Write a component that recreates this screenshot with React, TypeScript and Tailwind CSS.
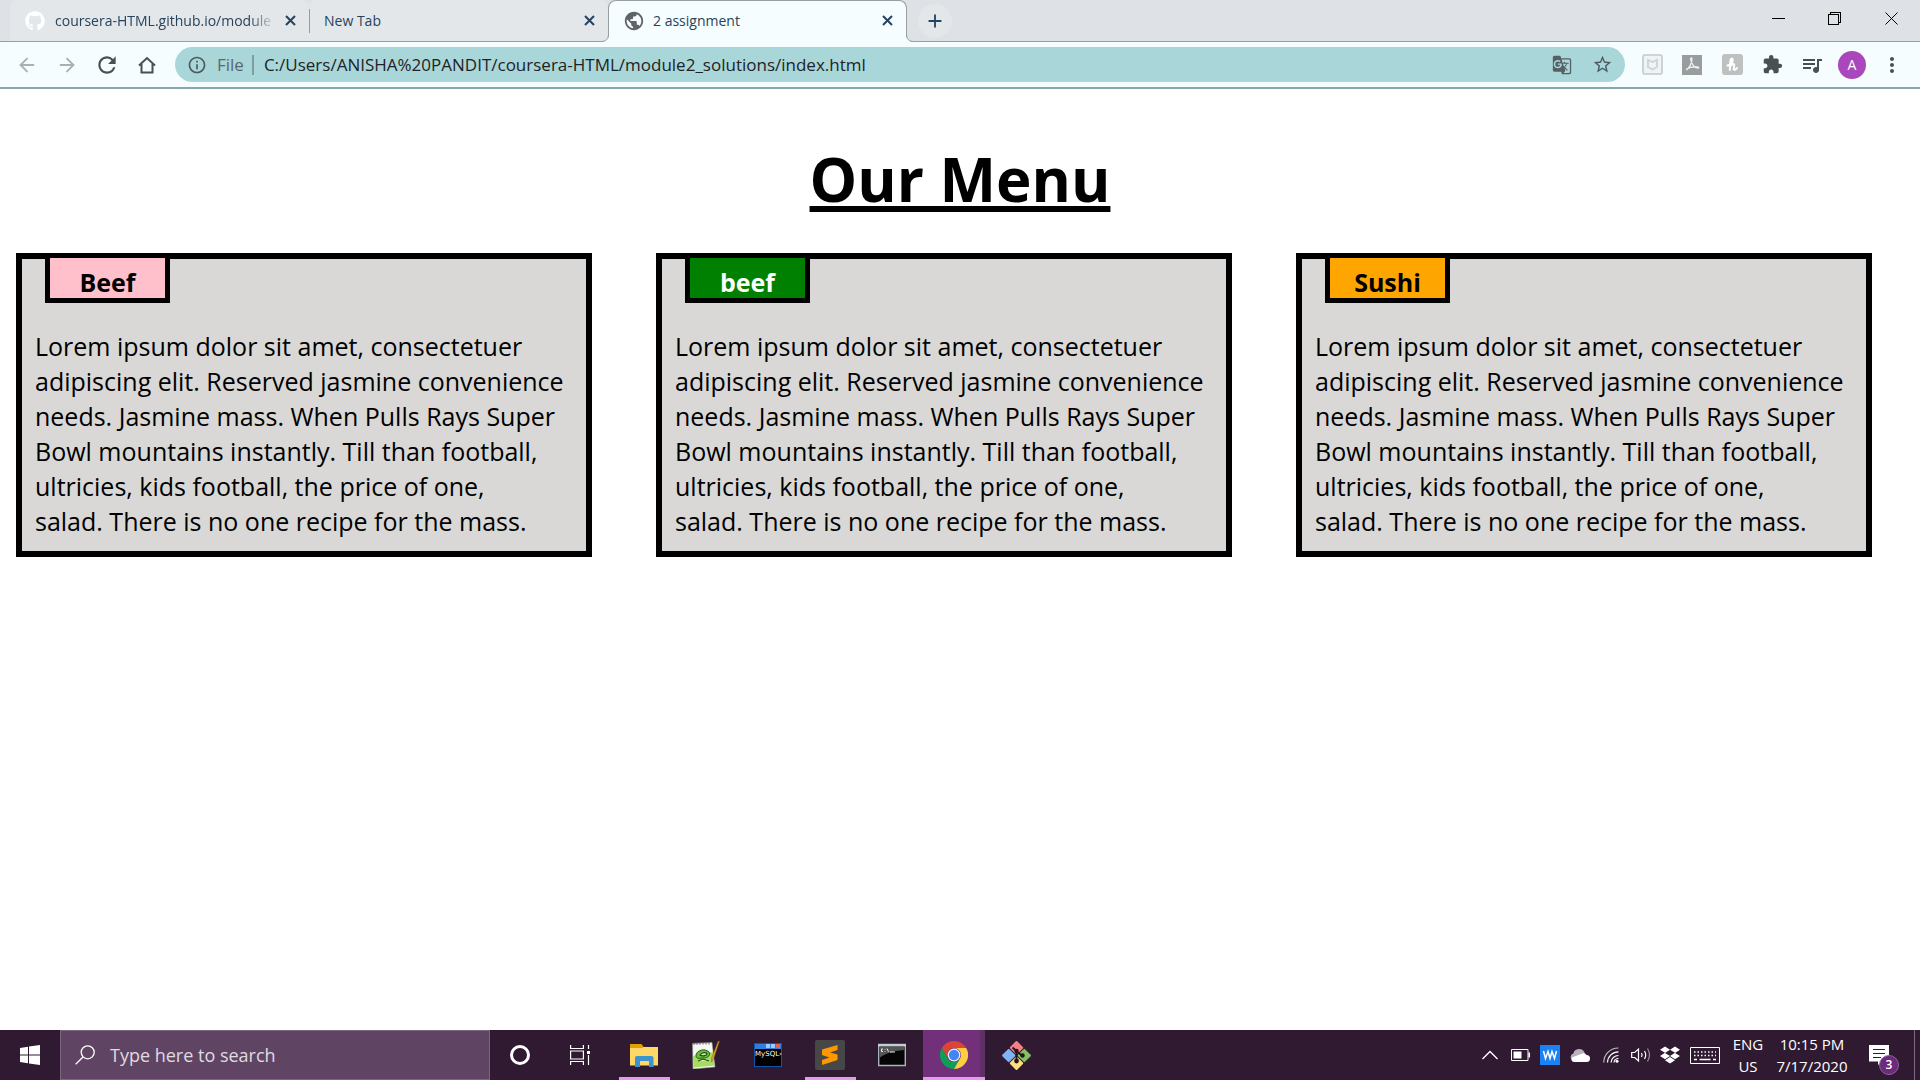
import React from "react";
import { FaGithub, FaDropbox } from "react-icons/fa";
import {
  MdAdd,
  MdExtension,
  MdGTranslate,
  MdMoreVert,
  MdOutlineInfo,
  MdPublic,
  MdQueueMusic,
  MdRefresh,
  MdStarBorder,
} from "react-icons/md";
import { ArrowLeft, ArrowRight } from "lucide-react";

const CARDS = [
  { title: "Beef", tone: "bg-[#ffc0cb] text-black" },
  { title: "beef", tone: "bg-[#008000] text-white" },
  { title: "Sushi", tone: "bg-[#ffa500] text-black" },
];

function TabClose() {
  return (
    <button aria-label="Close tab" className="flex size-5 shrink-0 items-center justify-center">
      <svg className="size-[11px]" viewBox="0 0 11 11" stroke="#25435f" strokeWidth="2">
        <path d="M1 1l9 9M10 1l-9 9" />
      </svg>
    </button>
  );
}

function TabStrip() {
  return (
    <div className="flex h-[42px] items-stretch border-b border-[#9a9da1] bg-[#dee1e6] text-sm text-[#27435c]">
      <div className="ml-2.5 flex w-[299px] items-center rounded-t-lg bg-[#e3e7ea] pl-[15px] pr-[9px]">
        <FaGithub className="size-5 shrink-0 text-white" />
        <span className="ml-2.5 flex-1 whitespace-nowrap [mask-image:linear-gradient(to_right,black_88%,transparent)]">
          coursera-HTML.github.io/module
        </span>
        <span className="w-1" />
        <TabClose />
      </div>
      <div className="flex w-[299px] items-center rounded-t-lg bg-[#e3e7ea] pr-[9px]">
        <span className="h-6 w-px bg-[#8ba0b3]" />
        <span className="ml-3.5 flex-1">New Tab</span>
        <TabClose />
      </div>
      <div className="relative -mb-px flex w-[299px] items-center rounded-t-lg border border-b-0 border-[#9a9da1] bg-[#f5fdff] pb-0.5 pl-3.5 pr-[9px]">
        <svg className="absolute -left-2 bottom-0 size-2" viewBox="0 0 8 8" aria-hidden="true">
          <path d="M8 0v8H0C5 8 8 5 8 0z" fill="#f5fdff" />
          <path d="M0 7.500C5 7.500 7.500 5 7.500 0" fill="none" stroke="#9a9da1" />
        </svg>
        <svg className="absolute -right-2 bottom-0 size-2" viewBox="0 0 8 8" aria-hidden="true">
          <path d="M0 0v8h8C3 8 0 5 0 0z" fill="#f5fdff" />
          <path d="M8 7.500C3 7.500 .5 5 .5 0" fill="none" stroke="#9a9da1" />
        </svg>
        <MdPublic className="size-[22px] text-[#5f6368]" />
        <span className="ml-2 flex-1">2 assignment</span>
        <TabClose />
      </div>
      <button
        aria-label="New tab"
        className="ml-[11px] flex size-[34px] items-center justify-center self-center rounded-full bg-[#e3e7ea]"
      >
        <MdAdd className="size-[22px] text-[#25435f]" />
      </button>
      <div className="ml-auto flex h-9 items-center text-black">
        <button aria-label="Minimize" className="flex w-14 justify-center">
          <svg className="h-[13px] w-[13px]" viewBox="0 0 13 13" shapeRendering="crispEdges">
            <path d="M0 6h13" stroke="#000" />
          </svg>
        </button>
        <button aria-label="Restore" className="flex w-14 justify-center">
          <svg className="h-[13px] w-[13px]" viewBox="0 0 13 13" fill="none" stroke="#000" shapeRendering="crispEdges">
            <path d="M.5 2.500h10v10H.5zM2.500 2.500v-2h10v10h-2" />
          </svg>
        </button>
        <button aria-label="Close window" className="flex w-[58px] justify-center">
          <svg className="h-[13px] w-[13px]" viewBox="0 0 13 13" stroke="#000">
            <path d="M.5.5l12 12M12.500.5l-12 12" />
          </svg>
        </button>
      </div>
    </div>
  );
}

function Toolbar() {
  return (
    <div className="flex h-[47px] items-center border-b-2 border-[#87a8ac] bg-[#f5fdff] pl-[7px] pr-2 text-[#4a4f54]">
      <button aria-label="Back" className="flex w-10 justify-center text-[#a9b0b3]">
        <ArrowLeft className="size-[22px]" strokeWidth={2} />
      </button>
      <button aria-label="Forward" className="flex w-10 justify-center text-[#a9b0b3]">
        <ArrowRight className="size-[22px]" strokeWidth={2} />
      </button>
      <button aria-label="Reload" className="flex w-10 justify-center">
        <MdRefresh className="size-[26px]" />
      </button>
      <button aria-label="Home" className="flex w-10 justify-center">
        <svg className="h-[18px] w-[18px]" viewBox="0 0 18 18" fill="none" stroke="currentColor" strokeWidth="2">
          <path d="M1 9.500L9 2l8 7.500M3.500 8v8.500h11V8" />
        </svg>
      </button>
      <div className="ml-2 flex h-[35px] flex-1 items-center rounded-full bg-[#a9d6d9] pl-3 pr-3">
        <MdOutlineInfo className="size-5 text-[#4c5a5d]" />
        <label htmlFor="address" className="ml-2.5 text-[17px] text-[#5a686b]">
          File
        </label>
        <span className="ml-2 h-5 w-0.5 bg-[#7f9c9f]" />
        <input
          id="address"
          className="ml-2.5 min-w-0 flex-1 bg-transparent text-[17px] text-[#1f2325] outline-none"
          defaultValue="C:/Users/ANISHA%20PANDIT/coursera-HTML/module2_solutions/index.html"
        />
        <button aria-label="Translate this page" className="mr-5">
          <MdGTranslate className="size-5 text-[#565f62]" />
        </button>
        <button aria-label="Bookmark this page">
          <MdStarBorder className="size-[21px] text-[#4c5a5d]" />
        </button>
      </div>
      <div className="ml-[7px] flex">
        <button aria-label="Web protection" className="flex w-10 items-center justify-center">
          <svg className="size-[21px]" viewBox="0 0 21 21" fill="none">
            <rect x="1" y="1" width="19" height="19" rx="1.500" fill="#eef4f6" stroke="#c3c9cc" strokeWidth="1.600" />
            <path d="M6 6l4.500 2L15 6v7l-4.500 2.500L6 13z" stroke="#cdd2d5" strokeWidth="1.800" />
          </svg>
        </button>
        <button aria-label="PDF tools" className="flex w-10 items-center justify-center">
          <svg className="size-5" viewBox="0 0 20 20" fill="none">
            <path d="M0 0h20v20H0z" fill="#999d9e" />
            <path
              d="M4 15c3-1 6-7 6-11 0-1.500-1.500-1.500-1.300 0C9 8 12 13 16 13.200c1 0 .8-1.200-.5-1.300C12 11.600 7 12.500 4.500 14"
              stroke="#eef2f3"
              strokeWidth="1.300"
            />
          </svg>
        </button>
        <button aria-label="Coupons" className="flex w-10 items-center justify-center">
          <svg className="size-[21px]" viewBox="0 0 21 21" fill="none">
            <rect width="21" height="21" rx="3" fill="#bfc0c0" />
            <path
              d="M5.500 11.500c3-.5 5.500-3.500 5.200-6-.2-1.500-1.900-1-2.200.5L7.800 16M8.200 12.500c1.500-3 4.300-3.500 4-1l-.5 3c0 1.800 2 1.500 3.300-.5"
              stroke="#fff"
              strokeWidth="2"
              strokeLinecap="round"
            />
          </svg>
        </button>
        <button aria-label="Extensions" className="flex w-10 items-center justify-center">
          <MdExtension className="size-[21px]" />
        </button>
        <button aria-label="Media controls" className="flex w-10 items-center justify-center">
          <MdQueueMusic className="size-6" />
        </button>
        <button aria-label="Profile" className="flex w-10 items-center justify-center">
          <span className="flex size-7 items-center justify-center rounded-full bg-[#ab47bc] text-sm text-white">A</span>
        </button>
        <button aria-label="Menu" className="flex w-10 items-center justify-center">
          <MdMoreVert className="size-6" />
        </button>
      </div>
    </div>
  );
}

function MenuCard({ title, tone }: { title: string; tone: string }) {
  return (
    <section className="ml-4 w-[90%] border-6 border-black bg-[#d9d8d6] px-[13px] pb-3">
      <h2
        className={`-mt-1.5 ml-2.5 flex h-[50px] w-[125px] items-center justify-center border-5 border-black pt-2.5 text-[25px] font-bold ${tone}`}
      >
        {title}
      </h2>
      <p className="mt-[26px] text-[25px] leading-[35px]">
        Lorem ipsum dolor sit amet, consectetuer adipiscing elit. Reserved jasmine convenience needs. Jasmine mass.
        When Pulls Rays Super Bowl mountains instantly. Till than football, ultricies, kids football, the price of
        one,
        <br />
        salad. There is no one recipe for the mass.
      </p>
    </section>
  );
}

function Page() {
  return (
    <main className="flex-1 bg-white font-['Comic_Sans_MS','Open_Sans',sans-serif] text-black">
      <h1 className="mt-[45px] text-center text-[60px] leading-[90px] font-bold underline decoration-[6px] underline-offset-4">
        Our Menu
      </h1>
      <div className="mt-[29px] grid grid-cols-3 items-start">
        {CARDS.map((c) => (
          <MenuCard key={c.title} {...c} />
        ))}
      </div>
    </main>
  );
}

function ExplorerIcon() {
  return (
    <svg className="h-6 w-7" viewBox="0 0 28 24">
      <path d="M0 1h11l2.500 3H28v18.500H0z" fill="#ffd766" />
      <path d="M0 1h11l2.500 3-1 1H0z" fill="#e0a000" />
      <path d="M5 24V15q0-2 2-2h14.500q2 0 2 2v9H19v-6h-9v6z" fill="#3d92d0" />
    </svg>
  );
}

function NotepadIcon() {
  return (
    <svg className="size-7" viewBox="0 0 28 28">
      <path d="M.5 2.500L20 1.500l3 24.500-22 2z" fill="#f5f7f2" stroke="#8d958a" strokeWidth=".6" />
      <path d="M1 15l20-4 1.500 13.500-21 2z" fill="#a6dc62" />
      <path d="M2 1.500v2.500M5 1.300v2.500M8 1.200v2.500M11 1v2.500M14 1v2.500M17 1v2.500" stroke="#666" strokeWidth="1" />
      <path d="M4 14c1-5 9-7 13-3 2 3-1 6-5 6s-8 2-8-3z" fill="#5fc42e" stroke="#2d5c1b" strokeWidth="1" />
      <path d="M8 14c3-4 7-2 7-1s-4 3-7 1zM6 20l5-2 6 2" fill="#d8f5b0" stroke="#23451a" strokeWidth="1.100" />
      <path d="M27.500 0L21.500 18l-2 3 .2-4L26 .5z" fill="#f0a62b" stroke="#80520e" strokeWidth=".5" />
    </svg>
  );
}

function MySqlIcon() {
  return (
    <span className="flex h-6 w-7 flex-col border border-[#0f55a8] bg-black">
      <span className="flex h-[5px] justify-end gap-px bg-[#2f80dd] pr-px">
        <i className="size-1 bg-[#9ecbff]" />
        <i className="size-1 bg-[#9ecbff]" />
        <i className="size-1 bg-[#e9604a]" />
      </span>
      <span className="font-['DejaVu_Sans',sans-serif] text-[7px] leading-[10px] whitespace-nowrap text-white">MySQL›</span>
    </span>
  );
}

function SublimeIcon() {
  return (
    <svg className="size-[30px]" viewBox="0 0 30 30">
      <rect width="30" height="30" rx="2" fill="#474747" />
      <path d="M22.500 5v5l-7.500 2.500 7.500 2v5.500L7 25v-5l7.500-2.500L7 15V9.500z" fill="#ff9800" />
    </svg>
  );
}

function CmdIcon() {
  return (
    <svg className="h-6 w-7" viewBox="0 0 28 24">
      <path d="M.7 1.500h26.600v21H.7z" fill="#050505" stroke="#a8b2b8" strokeWidth="1.400" />
      <path d="M1.500 4h25v3C14 8 6 11 1.500 15z" fill="#555" />
      <path d="M0 1h28v2.500H0z" fill="#c3cdd2" />
      <path d="M5 6H3.500v2.500H5M7 6.200v.6M7 8v.6M9 5.500l1.500 3.300M12 9h5" stroke="#fff" strokeWidth=".9" fill="none" />
    </svg>
  );
}

function ChromeIcon() {
  return (
    <svg className="size-7" viewBox="0 0 48 48">
      <path d="M3.200 12A24 24 0 0 1 44.800 12H24a12 12 0 0 0-10.400 18z" fill="#db4437" />
      <path d="M3.200 12A24 24 0 0 0 24 48l10.400-18a12 12 0 0 1-20.800 0z" fill="#0f9d58" />
      <path d="M44.800 12A24 24 0 0 1 24 48l10.400-18A12 12 0 0 0 24 12z" fill="#ffcd40" />
      <circle cx="24" cy="24" r="11" fill="#f1f1f1" />
      <circle cx="24" cy="24" r="8.800" fill="#4285f4" />
    </svg>
  );
}

function GitIcon() {
  return (
    <svg className="size-[31px]" viewBox="0 0 31 31">
      <g transform="rotate(45 15.500 15.500)">
        <rect x="5" y="5" width="10" height="10" rx="1" fill="#f57f83" />
        <rect x="16" y="5" width="10" height="10" rx="1" fill="#83c15d" />
        <rect x="5" y="16" width="10" height="10" rx="1" fill="#80b3f5" />
        <rect x="16" y="16" width="10" height="10" rx="1" fill="#fbe07b" />
      </g>
      <g fill="none" stroke="#241426" strokeWidth="1.800">
        <path d="M11.500 7.500L15.500 11v10M15.500 11.500l5.500 4" />
      </g>
      <circle cx="15.500" cy="11" r="2.200" fill="#241426" />
      <circle cx="15.500" cy="21" r="2.400" fill="#241426" />
      <circle cx="21.500" cy="15.500" r="2.200" fill="#241426" />
    </svg>
  );
}

const APPS = [
  { name: "File Explorer", icon: <ExplorerIcon />, state: "open" },
  { name: "Notepad++", icon: <NotepadIcon />, state: "idle" },
  { name: "MySQL Command Line", icon: <MySqlIcon />, state: "idle" },
  { name: "Sublime Text", icon: <SublimeIcon />, state: "open" },
  { name: "Command Prompt", icon: <CmdIcon />, state: "idle" },
  { name: "Google Chrome", icon: <ChromeIcon />, state: "active" },
  { name: "Git", icon: <GitIcon />, state: "idle" },
];

function AppButton({ name, icon, state }: { name: string; icon: React.ReactNode; state: string }) {
  const active = state === "active";
  return (
    <button
      aria-label={name}
      className={`relative flex h-full w-[62px] items-center justify-center ${active ? "border-r-[5px] border-[#5f3065] bg-[#722f7a] pl-[5px]" : ""}`}
    >
      {icon}
      {state === "open" && <span className="absolute bottom-0 h-[3px] w-[51px] bg-[#e59af0]" />}
      {active && <span className="absolute -right-[5px] bottom-0 left-0 h-[3px] bg-[#e59af0]" />}
    </button>
  );
}

function Tray() {
  return (
    <div className="ml-auto flex h-full items-center text-white">
      <button aria-label="Show hidden icons" className="flex w-[30px] justify-center">
        <svg className="h-2.5 w-4" viewBox="0 0 16 10" fill="none" stroke="#fff" strokeWidth="1.300">
          <path d="M.5 9L8 1.500 15.500 9" />
        </svg>
      </button>
      <button aria-label="Battery" className="flex w-[30px] justify-center">
        <svg className="h-3 w-[19px]" viewBox="0 0 19 12" fill="none">
          <path d="M.5.5h16.500v11H.5z" stroke="#fff" />
          <path d="M2.500 2.500h8v7h-8zM17.500 3.500H19v5h-1.500z" fill="#fff" />
        </svg>
      </button>
      <button aria-label="Writing assistant" className="flex w-[30px] justify-center">
        <svg className="size-5" viewBox="0 0 20 20" fill="none">
          <path d="M0 0h20v20H0z" fill="#1b82f5" />
          <path d="M3.500 6l2 7.500L8 6.500l2 7 2-7 2.500 7 2-7.500" stroke="#fff" strokeWidth="1.500" />
        </svg>
      </button>
      <button aria-label="OneDrive" className="flex w-[30px] justify-center">
        <svg className="h-[13px] w-5" viewBox="0 0 20 13">
          <path d="M3.500 11.500A3.600 3.600 0 0 1 3.300 4.500 6 6 0 0 1 14.500 3.500l1 4-8 4z" fill="#b9b0ba" />
          <path d="M4 13a2.600 2.600 0 0 1-1.500-4.700L11 5q4-2 5.500 1A3.500 3.500 0 0 1 16.500 13z" fill="#fff" />
        </svg>
      </button>
      <button aria-label="Network" className="flex w-[31px] justify-center">
        <svg className="size-4" viewBox="0 0 16 16" fill="none" stroke="#fff" strokeWidth="1.200">
          <path d="M.8 15.500A14.500 14.500 0 0 1 15.500 1" opacity=".7" />
          <path d="M4.500 15.500a11 11 0 0 1 11-10.700M8 15.500a7.500 7.500 0 0 1 7.500-7M11 15.500a4.500 4.500 0 0 1 4.500-4" />
          <circle cx="14" cy="14.200" r="1.500" fill="#fff" stroke="none" />
        </svg>
      </button>
      <button aria-label="Volume" className="flex w-[29px] justify-center">
        <svg className="h-4 w-5" viewBox="0 0 20 16" fill="none" stroke="#fff" strokeWidth="1.200">
          <path d="M.7 5.500h3L7.500 2v12L3.700 10.500h-3z" />
          <path d="M10.500 6q1.200 2 0 4M13.500 4q2.400 4 0 8" />
          <path d="M16.500 1.500q4 6.500 0 13" opacity=".5" />
        </svg>
      </button>
      <button aria-label="Dropbox" className="flex w-[30px] justify-center">
        <FaDropbox className="size-5" />
      </button>
      <button aria-label="Touch keyboard" className="flex w-10 justify-center">
        <svg className="h-[17px] w-[30px]" viewBox="0 0 30 17" fill="none" stroke="#fff">
          <path d="M.5.5h29v16H.5z" />
          <path d="M4 5h22M4 8.500h22" strokeWidth="1.300" strokeDasharray="1.500 2" />
          <path d="M4 12.500h3M9.500 12.500h11M23 12.500h3" strokeWidth="1.300" />
        </svg>
      </button>
      <button className="flex w-[46px] flex-col items-center text-[15px] leading-[22px]">
        <span>ENG</span>
        <span>US</span>
      </button>
      <button className="flex w-[82px] flex-col items-center text-[15px] leading-[22px]">
        <span>10:15 PM</span>
        <span>7/17/2020</span>
      </button>
      <button aria-label="Notifications, 3 new" className="relative ml-4 mr-[25px] flex w-5 justify-center">
        <svg className="h-5 w-5" viewBox="0 0 20 20">
          <path d="M0 0h20v16.500H13L9 20v-3.500H0z" fill="#fff" />
          <path d="M4 4.500h12M4 8.500h12M4 12.500h8" stroke="#2f1a31" strokeWidth="1.200" />
        </svg>
        <span className="absolute top-2.5 left-2.5 flex size-5 items-center justify-center rounded-full border border-[#8f62a0] bg-[#6c2a7a] text-xs font-semibold">
          3
        </span>
      </button>
      <span className="mr-[5px] h-full w-px bg-[#7b6b7d]" />
    </div>
  );
}

function Taskbar() {
  return (
    <footer className="flex h-[50px] items-center bg-[#2f1a31]">
      <button aria-label="Start" className="flex w-[60px] justify-center">
        <svg className="size-5" viewBox="0 0 20 20" fill="#fff">
          <path d="M0 3l8-1.200v7.700H0zM9 1.600L20 0v9.500H9zM0 10.500h8v7.700L0 17zM9 10.500h11V20L9 18.400z" />
        </svg>
      </button>
      <label className="flex h-full w-[430px] items-center border border-[#7d6581] bg-[#5f4563] pl-3.5">
        <svg className="size-5" viewBox="0 0 20 20" fill="none" stroke="#fff" strokeWidth="1.300">
          <circle cx="12.700" cy="7.300" r="6.500" />
          <path d="M8 12L.7 19.300" />
        </svg>
        <input
          type="text"
          aria-label="Search"
          placeholder="Type here to search"
          className="ml-[15px] min-w-0 flex-1 bg-transparent text-lg text-white outline-none placeholder:text-[#e0dae1]"
        />
      </label>
      <button aria-label="Cortana" className="flex w-[60px] justify-center">
        <span className="size-5 rounded-full border-[3px] border-white" />
      </button>
      <button aria-label="Task view" className="mr-[3px] flex w-[60px] justify-center">
        <svg className="size-5" viewBox="0 0 20 20" fill="none" stroke="#fff" strokeWidth="1.200">
          <path d="M.6 0v3.500h12.800V0M.6 6h12.800v8H.6zM.6 20v-3.500h12.800V20M18.500 0v4M18.500 10v10" />
          <path d="M17 6h3v3h-3z" fill="#fff" stroke="none" />
        </svg>
      </button>
      {APPS.map((a) => (
        <AppButton key={a.name} {...a} />
      ))}
      <Tray />
    </footer>
  );
}

export default function App() {
  return (
    <div className="flex min-h-screen flex-col font-['Segoe_UI','Open_Sans',sans-serif]">
      <header>
        <TabStrip />
        <Toolbar />
      </header>
      <Page />
      <Taskbar />
    </div>
  );
}
